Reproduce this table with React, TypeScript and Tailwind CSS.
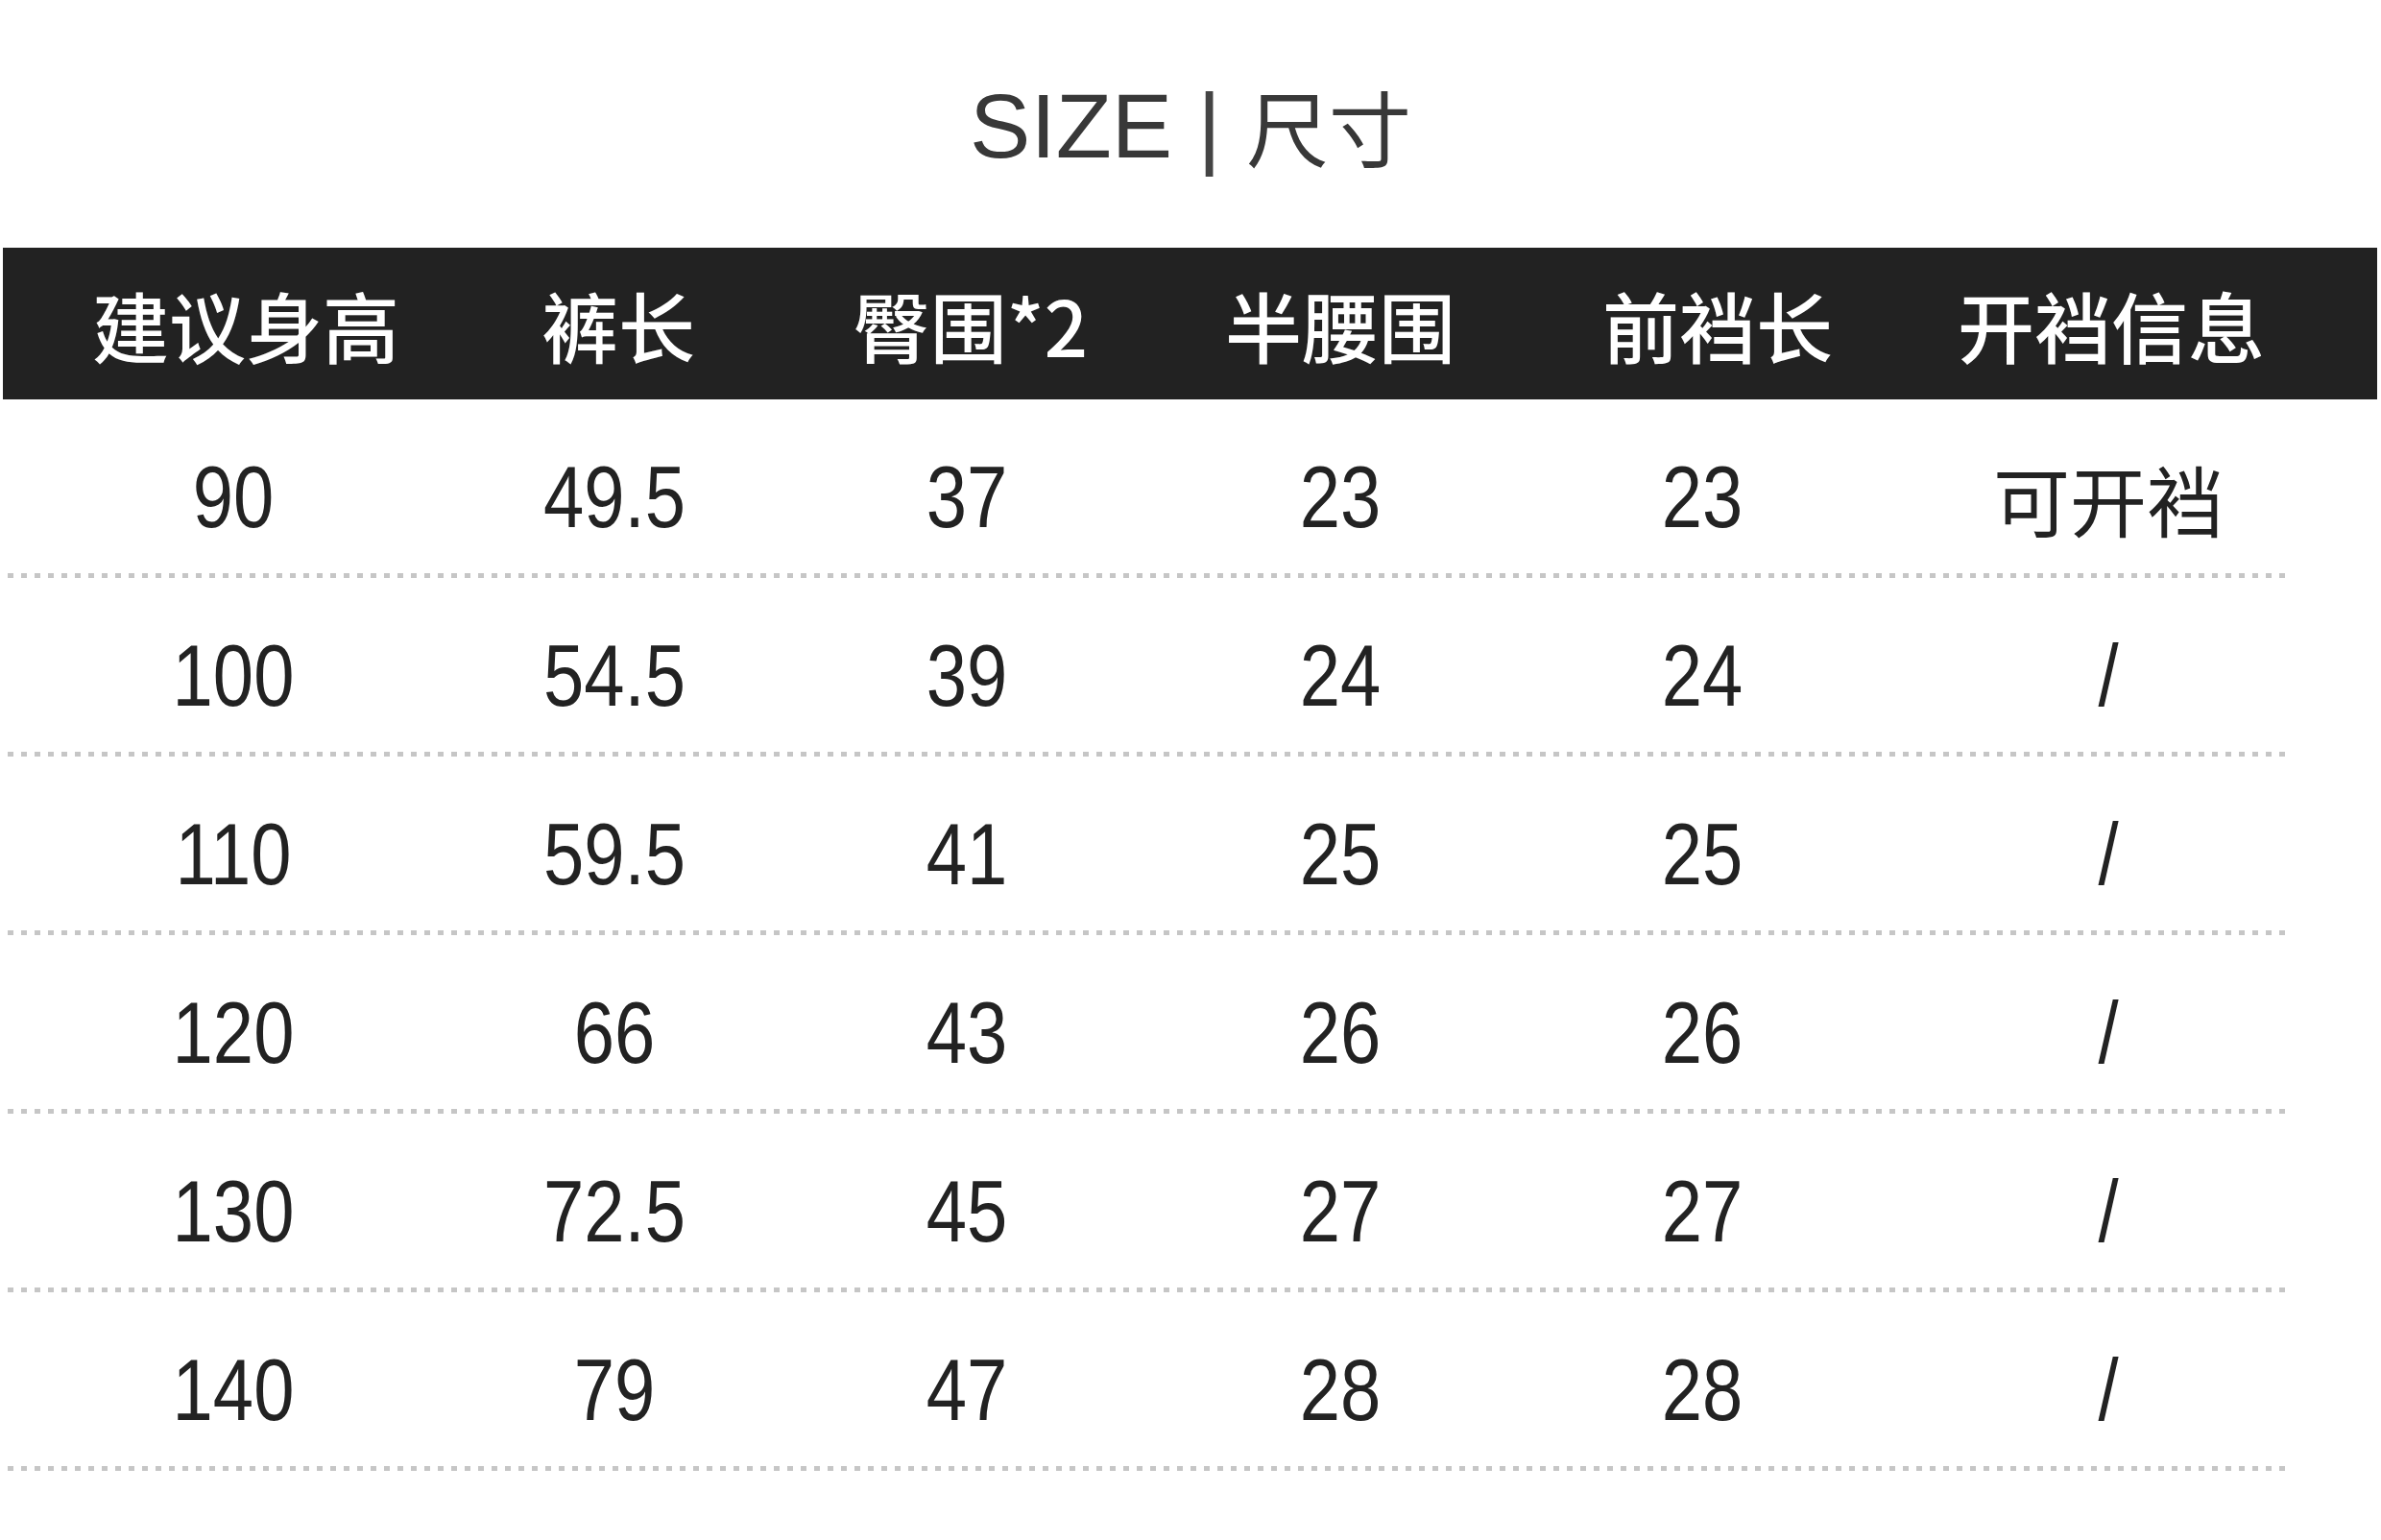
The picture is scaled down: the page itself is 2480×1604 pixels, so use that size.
import React from 'react';

const SizeChart = () => {
  const headers = ['建议身高', '裤长', '臀围*2', '半腰围', '前裆长', '开裆信息'];

  const rows = [
    ['90', '49.5', '37', '23', '23', '可开裆'],
    ['100', '54.5', '39', '24', '24', '/'],
    ['110', '59.5', '41', '25', '25', '/'],
    ['120', '66', '43', '26', '26', '/'],
    ['130', '72.5', '45', '27', '27', '/'],
    ['140', '79', '47', '28', '28', '/']
  ];

  return (
    <div className="w-[2480px] h-[1604px] bg-white overflow-hidden">
      {/* Title */}
      <div className="h-[258px] flex items-center justify-center pt-[4px] text-[#383838] font-['Liberation_Sans','Noto_Sans_CJK_SC',sans-serif]">
        <span className="text-[95px] leading-none">SIZE</span>
        <span className="text-[95px] leading-none font-light mx-[26px] text-[#444]">|</span>
        <span className="text-[86px] leading-none font-['Noto_Sans_CJK_SC',sans-serif]">尺寸</span>
      </div>

      {/* Header bar */}
      <div className="ml-[3px] mr-[4px] h-[158px] bg-[#222222] pl-[60px] grid grid-cols-[386px_390px_344px_426px_360px_460px] items-center">
        {headers.map((h, i) => (
          <div
            key={i}
            className="text-center text-white text-[80px] leading-none font-medium font-['Noto_Sans_CJK_SC',sans-serif] whitespace-nowrap"
          >
            {h}
          </div>
        ))}
      </div>

      {/* Rows */}
      <div className="flex flex-col">
        {rows.map((row, r) => (
          <div key={r} className="flex flex-col">
            <div className="h-[181px] pt-[22px] pl-[45px] grid grid-cols-[396px_398px_336px_442px_312px_534px] items-center text-[#222]">
              {row.map((cell, c) => {
                const cjk = /[\u4e00-\u9fff]/.test(cell);
                return (
                  <div
                    key={c}
                    className={
                      cjk
                        ? "text-center text-[80px] leading-none font-['Noto_Sans_CJK_SC',sans-serif]"
                        : "text-center text-[76px] leading-none scale-y-120 font-['Liberation_Sans',sans-serif]"
                    }
                  >
                    {cell}
                  </div>
                );
              })}
            </div>
            <div className="ml-[8px] w-[2374px] h-[5px] bg-[linear-gradient(to_right,#c6c6c6_6px,transparent_6px)] bg-[length:14px_5px] bg-repeat-x"></div>
          </div>
        ))}
      </div>
    </div>
  );
};

export default function App() {
  return <SizeChart />;
}
